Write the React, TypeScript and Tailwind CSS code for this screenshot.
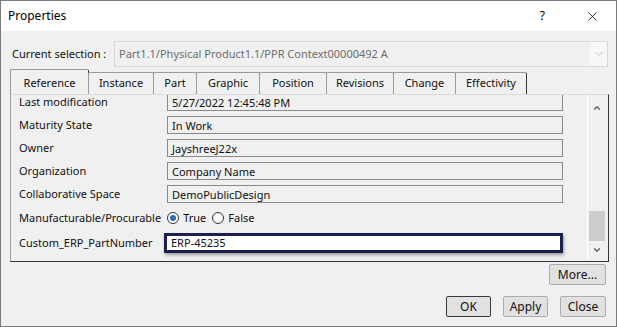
import { ChevronDown, ChevronUp, X } from 'lucide-react'

const TABS = [
  { name: 'Reference', w: 79 },
  { name: 'Instance', w: 66 },
  { name: 'Part', w: 44 },
  { name: 'Graphic', w: 64 },
  { name: 'Position', w: 68 },
  { name: 'Revisions', w: 68 },
  { name: 'Change', w: 63 },
  { name: 'Effectivity', w: 72 },
]

const FIELDS = [
  { label: 'Last modification', value: '5/27/2022 12:45:48 PM' },
  { label: 'Maturity State', value: 'In Work' },
  { label: 'Owner', value: 'JayshreeJ22x' },
  { label: 'Organization', value: 'Company Name' },
  { label: 'Collaborative Space', value: 'DemoPublicDesign' },
]

function Radio({ checked, label }: { checked: boolean; label: string }) {
  return (
    <div className="flex items-center gap-[4px]">
      <div className="w-[12px] h-[12px] rounded-full border border-[#333] bg-white flex items-center justify-center">
        {checked && <div className="w-[6px] h-[6px] rounded-full bg-[#2a6fb8]" />}
      </div>
      <span>{label}</span>
    </div>
  )
}

function Button({ label, w, primary }: { label: string; w: number; primary?: boolean }) {
  return (
    <div
      className={
        'h-[21px] rounded-[2px] bg-[#e1e1e1] flex items-center justify-center text-[#111] text-[12px] ' +
        (primary ? 'border border-[#3a3a3a]' : 'border border-[#adadad]')
      }
      style={{ width: w }}
    >
      {label}
    </div>
  )
}

export default function App() {
  return (
    <div
      className="w-[617px] h-[327px] bg-[#f0f0f0] border border-[#7a7a7a] flex flex-col text-[11px] text-[#111] overflow-hidden whitespace-nowrap"
      style={{ fontFamily: '"Noto Sans", "Open Sans", sans-serif' }}
    >
      {/* title bar */}
      <div className="h-[30px] bg-white flex items-center shrink-0">
        <span className="ml-[7px] text-black text-[12px]">Properties</span>
        <span className="ml-auto mr-[40px] text-black text-[12px]">?</span>
        <X size={15} strokeWidth={1.2} className="mr-[16px] text-black" />
      </div>

      {/* current selection */}
      <div className="flex items-center mt-[10px] ml-[11px] h-[26px]">
        <span className="w-[102px] shrink-0">Current selection :</span>
        <div className="w-[494px] h-[26px] border border-[#d9d9d9] bg-[#f0f0f0] flex items-center">
          <span className="ml-[4px] text-[#6d6d6d]">Part1.1/Physical Product1.1/PPR Context00000492 A</span>
          <div className="ml-auto w-[17px] h-full bg-[#f7f7f7] flex items-center justify-center">
            <ChevronDown size={12} strokeWidth={1} className="text-[#9a9a9a]" />
          </div>
        </div>
      </div>

      {/* tabs */}
      <div className="flex items-end ml-[9px] mt-[2px] h-[25px]">
        {TABS.map((t, i) => (
          <div
            key={t.name}
            className={
              'flex items-center justify-center border-t border-l border-[#9a9a9a] rounded-t-[2px] bg-[#f0f0f0] ' +
              (i === 0 ? 'h-[25px] border-r border-r-[#333] pt-[2px]' : 'h-[22px] border-r border-r-[#333]') +
              (i > 0 ? ' -ml-px' : '')
            }
            style={{ width: t.w }}
          >
            {t.name}
          </div>
        ))}
      </div>

      {/* tab panel */}
      <div className="ml-[9px] w-[599px] h-[168px] border-t border-l border-t-[#dadbdc] border-l-[#a0a0a0] border-r border-b border-r-[#333] border-b-[#333] flex overflow-hidden shrink-0">
        <div className="flex-1 overflow-hidden">
          <div className="flex flex-col gap-[5px] mt-[-2px] ml-[8px]">
            {FIELDS.map((f) => (
              <div key={f.label} className="flex items-center h-[18px]">
                <span className="w-[148px]">{f.label}</span>
                <div className="w-[396px] h-[18px] border border-[#8a8a8a] bg-[#f0f0f0] flex items-center pl-[4px] leading-none">
                  {f.value}
                </div>
              </div>
            ))}
          </div>
          <div className="flex items-center h-[18px] mt-[6px] ml-[8px] gap-[6px]">
            <span>Manufacturable/Procurable</span>
            <Radio checked label="True" />
            <Radio checked={false} label="False" />
          </div>
          <div className="flex items-center h-[20px] mt-[6px] ml-[8px]">
            <span className="w-[145px]">Custom_ERP_PartNumber</span>
            <div className="w-[399px] h-[20px] border-[3px] border-[#1b2050] bg-white flex items-center pl-[4px] shadow-[1px_2px_3px_rgba(0,0,0,0.35)]">
              ERP-45235
            </div>
          </div>
        </div>
        <div className="w-[19px] mr-[2px] border-l border-white flex flex-col items-center">
          <ChevronUp size={10} strokeWidth={3} className="mt-[8px] text-[#606060]" />
          <div className="flex-1" />
          <div className="w-[16px] h-[30px] bg-[#cdcdcd]" />
          <ChevronDown size={10} strokeWidth={3} className="mt-[4px] mb-[6px] text-[#606060]" />
        </div>
      </div>

      {/* More */}
      <div className="flex justify-end mt-[2px] mr-[10px]">
        <Button label="More..." w={57} />
      </div>

      {/* bottom buttons */}
      <div className="flex justify-end gap-[12px] mt-[11px] mr-[10px]">
        <Button label="OK" w={45} primary />
        <Button label="Apply" w={45} />
        <Button label="Close" w={46} />
      </div>
    </div>
  )
}
